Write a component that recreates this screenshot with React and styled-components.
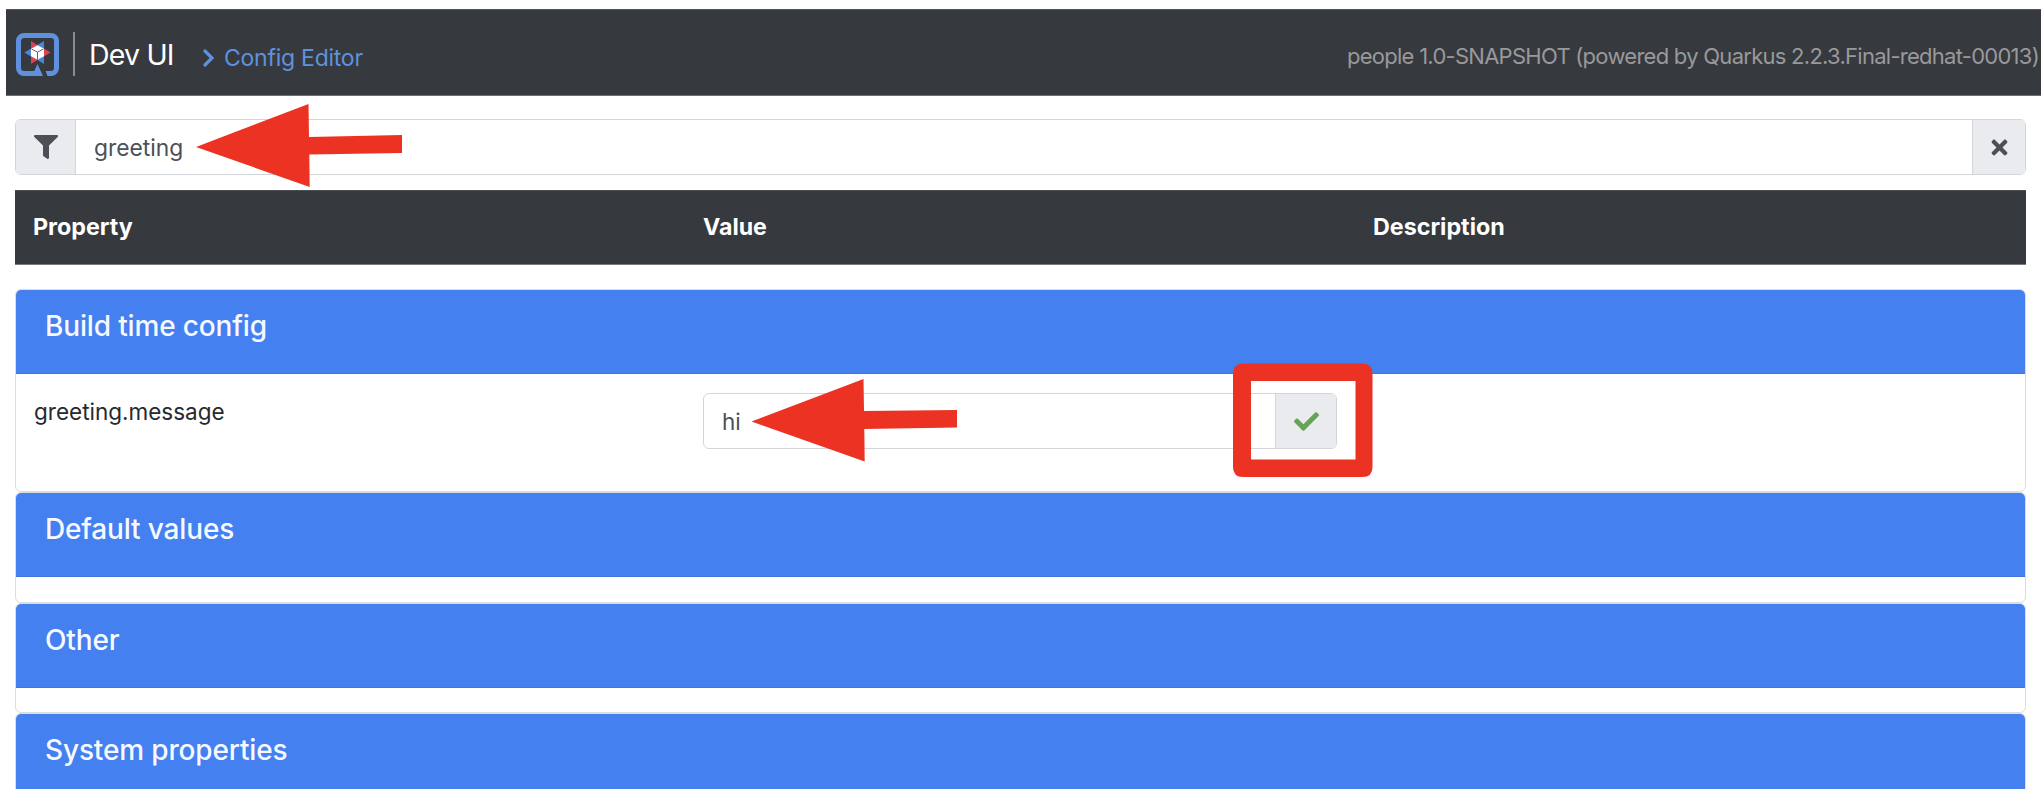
import React from "react";
import styled, { createGlobalStyle } from "styled-components";
import { FaFilter, FaTimes, FaCheck } from "react-icons/fa";

const GlobalStyle = createGlobalStyle`
  *, *::before, *::after { box-sizing: border-box; }
  body { margin: 0; background: #fff; overflow: hidden; }
`;

const Page = styled.div`
  position: relative;
  height: 789px;
  overflow: hidden;
  padding: 9px 3px 0 6px;
  background: #fff;
  font-family: Inter, "Liberation Sans", sans-serif;
  font-size: 22px;
  color: #26292d;
`;

const Navbar = styled.header`
  display: flex;
  align-items: center;
  height: 87px;
  padding: 0 2px 0 10px;
  background: #36393e;
  border-top: 1px solid #55575a;
  border-bottom: 1px solid #6c6f73;
`;

const Logo = styled.svg`
  width: 43px;
  height: 43px;
  margin-top: 4px;
`;

const Divider = styled.span`
  width: 2px;
  height: 44px;
  margin: 3px 14px 0 14px;
  background: #8a8c8f;
`;

const Label = styled.span`
  display: block;
  white-space: nowrap;
  line-height: 30px;
  font-size: ${(p) => p.$size || 22.5}px;
  font-weight: ${(p) => p.$weight || 400};
  letter-spacing: ${(p) => p.$spacing || 0}px;
`;

const Brand = styled(Label)`
  color: #fff;
  width: 114px;
  margin-top: 5px;
`;

const Crumb = styled.a`
  display: flex;
  align-items: center;
  gap: 10px;
  margin-top: 11px;
  color: #5f91df;
`;

const Version = styled(Label)`
  margin: 6px 0 0 auto;
  color: #98999b;
`;

const Content = styled.main`
  padding: 23px 15px 0 9px;
`;

const InputGroup = styled.div`
  display: flex;
  height: 56px;
  border: 1.5px solid #d2d6db;
  border-radius: 6px;
  overflow: hidden;
  background: #fff;
  color: #4b5056;
`;

const Addon = styled.span`
  display: flex;
  align-items: center;
  justify-content: center;
  width: ${(p) => p.$width}px;
  background: #eaebef;
  color: ${(p) => p.$color || "#4b5056"};
  border-${(p) => p.$side}: 1px solid #d2d6db;
`;

const Field = styled.div`
  flex: 1;
  display: flex;
  align-items: center;
  padding: 1px 0 0 18px;
`;

const TableHead = styled.div`
  display: grid;
  grid-template-columns: 670px 670px 1fr;
  align-items: center;
  height: 75px;
  margin: 15px 0 24px;
  padding: 0 0 1px 18px;
  background: #36393e;
  border-top: 1px solid #4a4d52;
  border-bottom: 1px solid #777a7e;
  color: #fff;
`;

const Card = styled.section`
  height: ${(p) => p.$height}px;
  border: 1px solid #dcdddf;
  border-radius: 6px;
  overflow: hidden;
`;

const CardHeader = styled.h5`
  height: 84px;
  margin: 0;
  padding: 21px 0 0 29px;
  background: #4480ef;
  border-bottom: 1px solid #4276d6;
  color: #f6f9ff;
`;

const Row = styled.div`
  display: grid;
  grid-template-columns: 669px 634px 1fr;
  padding: 19px 0 0 18px;
`;

const PropertyName = styled(Label)`
  padding-top: 4px;
`;

const Annotations = styled.svg`
  position: absolute;
  left: 0;
  top: 0;
  pointer-events: none;
`;

const QuarkusLogo = () => (
  <Logo viewBox="0 0 43 43">
    <path
      d="M20 40.5H8a5.500 5.500 0 0 1-5.500-5.500V8A5.500 5.500 0 0 1 8 2.500H35A5.500 5.500 0 0 1 40.500 8V35A5.500 5.500 0 0 1 35 40.500H31.500"
      fill="none"
      stroke="#5f91df"
      strokeWidth="5"
    />
    <path d="M21 34.500L25 38V43H32L29 38H26z" fill="#36393e" />
    <path d="M21.500 31L27 43H16z M29.500 38H36V43H31.500z" fill="#5f91df" />
    <path d="M15 8L21.500 12V19.500L15 16z M34.500 19.500L28 15.500V23.500z M15 31V23L21.500 19.500V27z" fill="#d9435a" />
    <path d="M28 8V16L21.500 19.500V12z M8.500 19.500L15 15.500V23.500z M28 31L21.500 27V19.500L28 23z" fill="#4b86dc" />
    <path d="M21.500 12.200L28 15.800V23.200L21.500 26.800L15 23.200V15.800z" fill="#fff" />
    <path d="M15.500 16L21.500 19.200L27.500 16M21.500 19.200V26.800" fill="none" stroke="#555" strokeWidth="0.900" />
  </Logo>
);

const sections = [
  { title: "Default values", height: 111 },
  { title: "Other", height: 110 },
  { title: "System properties", height: 110 },
];

const Title = ({ children }) => (
  <Label $size={28} $weight={500} $spacing={-0.15}>{children}</Label>
);

export default function App() {
  return (
    <Page>
      <GlobalStyle />
      <Navbar>
        <QuarkusLogo />
        <Divider />
        <Brand $size={28.5} $spacing={-0.8}>Dev UI</Brand>
        <Crumb>
          <svg width="11" height="18" viewBox="0 0 11 18">
            <path d="M2 2L9 9L2 16" fill="none" stroke="#5f91df" strokeWidth="3.200" strokeLinecap="round" />
          </svg>
          <Label $size={23} $spacing={-0.25}>Config Editor</Label>
        </Crumb>
        <Version $size={22} $spacing={-0.73}>people 1.0-SNAPSHOT (powered by Quarkus 2.2.3.Final-redhat-00013)</Version>
      </Navbar>
      <Content>
        <InputGroup>
          <Addon $width={60} $side="right"><FaFilter size={24} /></Addon>
          <Field><Label $size={22.8}>greeting</Label></Field>
          <Addon $width={53} $side="left"><FaTimes size={23} /></Addon>
        </InputGroup>
        <TableHead>
          <Label $size={23.3} $weight={700}>Property</Label>
          <Label $size={23.2} $weight={700}>Value</Label>
          <Label $size={23.3} $weight={700}>Description</Label>
        </TableHead>
        <Card $height={203}>
          <CardHeader><Title>Build time config</Title></CardHeader>
          <Row>
            <PropertyName>greeting.message</PropertyName>
            <InputGroup>
              <Field><Label>hi</Label></Field>
              <Addon $width={61} $side="left" $color="#64a455"><FaCheck size={25} /></Addon>
            </InputGroup>
          </Row>
        </Card>
        {sections.map((s) => (
          <Card key={s.title} $height={s.height}>
            <CardHeader><Title>{s.title}</Title></CardHeader>
          </Card>
        ))}
      </Content>
      <Annotations width="2044" height="789" viewBox="0 0 2044 789">
        <g fill="#ec3323">
          <path d="M196 147L308.500 104L309 137L402 135V153L309.300 154.500L309.700 187z" />
          <path d="M751.500 421.500L863.500 379L864 411L957 410V427.500L864.300 429L864.700 461.500z" />
        </g>
        <path
          fill="#ec3323"
          fillRule="evenodd"
          d="M1243 363.500H1362.500Q1372.500 363.500 1372.500 373.500V467Q1372.500 477 1362.500 477H1243Q1233 477 1233 467V373.500Q1233 363.500 1243 363.500zM1251 381V459.500H1355.500V381z"
        />
      </Annotations>
    </Page>
  );
}
